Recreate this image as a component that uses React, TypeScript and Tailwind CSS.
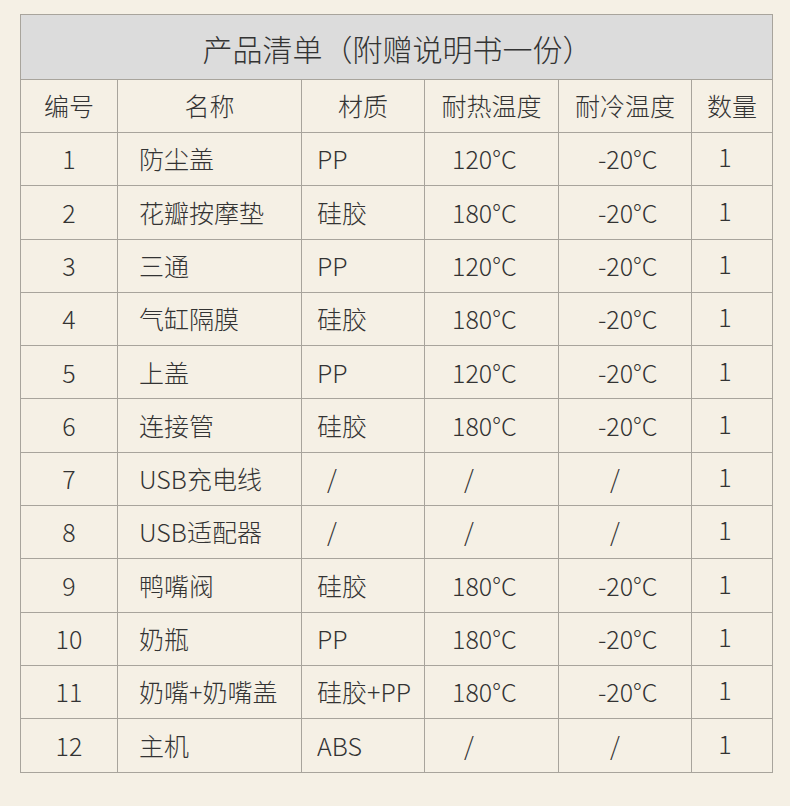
const rows = [
  { no: "1", name: "防尘盖", mat: "PP", hot: "120°C", cold: "-20°C" },
  { no: "2", name: "花瓣按摩垫", mat: "硅胶", hot: "180°C", cold: "-20°C" },
  { no: "3", name: "三通", mat: "PP", hot: "120°C", cold: "-20°C" },
  { no: "4", name: "气缸隔膜", mat: "硅胶", hot: "180°C", cold: "-20°C" },
  { no: "5", name: "上盖", mat: "PP", hot: "120°C", cold: "-20°C" },
  { no: "6", name: "连接管", mat: "硅胶", hot: "180°C", cold: "-20°C" },
  { no: "7", name: "USB充电线", mat: "/", hot: "/", cold: "/" },
  { no: "8", name: "USB适配器", mat: "/", hot: "/", cold: "/" },
  { no: "9", name: "鸭嘴阀", mat: "硅胶", hot: "180°C", cold: "-20°C" },
  { no: "10", name: "奶瓶", mat: "PP", hot: "180°C", cold: "-20°C" },
  { no: "11", name: "奶嘴+奶嘴盖", mat: "硅胶+PP", hot: "180°C", cold: "-20°C" },
  { no: "12", name: "主机", mat: "ABS", hot: "/", cold: "/" },
];

const cell = "border border-[#a8a49c] p-0 align-middle";

const App = () => {
  return (
    <div
      className="w-[790px] h-[806px] bg-[#f5f0e5] pt-[14px] pl-[20px] text-[#333333] font-light"
      style={{
        fontFamily:
          '"Noto Sans CJK SC Light", "Noto Sans CJK SC DemiLight", "Noto Sans CJK SC", "Noto Sans", sans-serif',
      }}
    >
      <table className="table-fixed border-collapse w-[752px]">
        <colgroup>
          <col className="w-[97px]" />
          <col className="w-[184px]" />
          <col className="w-[123px]" />
          <col className="w-[134px]" />
          <col className="w-[133px]" />
          <col className="w-[81px]" />
        </colgroup>
        <thead>
          <tr className="h-[65px] bg-[#dcdcdc]">
            <th colSpan={6} className={`${cell} text-[30px] font-light text-center pt-[3px] pl-[2px]`}>
              产品清单（附赠说明书一份）
            </th>
          </tr>
          <tr className="h-[53px] text-[25px]">
            <th className={`${cell} font-light text-center`}>编号</th>
            <th className={`${cell} font-light text-center`}>名称</th>
            <th className={`${cell} font-light text-center`}>材质</th>
            <th className={`${cell} font-light text-center`}>耐热温度</th>
            <th className={`${cell} font-light text-center`}>耐冷温度</th>
            <th className={`${cell} font-light text-center`}>数量</th>
          </tr>
        </thead>
        <tbody>
          {rows.map((r) => (
            <tr key={r.no} className="h-[53.3px] text-[25px]">
              <td className={`${cell} text-center`}>{r.no}</td>
              <td className={`${cell} pl-[21px]`}>{r.name}</td>
              <td className={`${cell} ${r.mat === "/" ? "pl-[25px]" : "pl-[15px]"}`}>{r.mat}</td>
              <td className={`${cell} ${r.hot === "/" ? "pl-[39px]" : "pl-[27px]"}`}>{r.hot}</td>
              <td className={`${cell} ${r.cold === "/" ? "pl-[51px]" : "pl-[39px]"}`}>{r.cold}</td>
              <td className={`${cell} text-center pr-[14px] pb-[4px]`}>1</td>
            </tr>
          ))}
        </tbody>
      </table>
    </div>
  );
};

export default App;
